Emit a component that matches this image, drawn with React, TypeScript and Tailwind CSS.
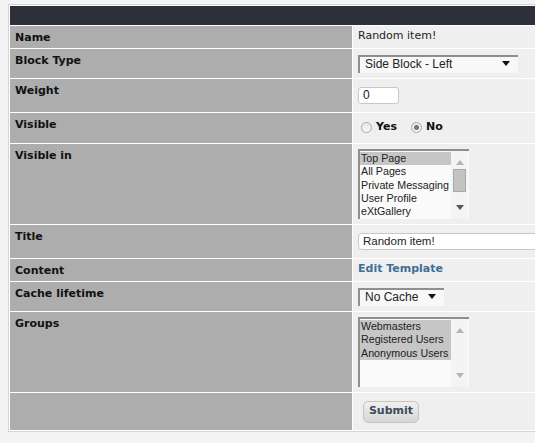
import React from 'react';

const labelFont = { fontFamily: '"DejaVu Sans", Verdana, sans-serif' };
const ctrlFont = { fontFamily: '"Liberation Sans", Arial, sans-serif' };

const Row: React.FC<{ label?: string; h: string; children?: React.ReactNode }> = ({ label, h, children }) => (
  <>
    <div className={`bg-[#adadad] pl-[5px] pt-[5px] text-[11px] leading-[13px] font-bold text-[#111] ${h}`} style={labelFont}>
      {label}
    </div>
    <div className={`bg-[#efefef] pl-[5px] flex items-center ${h}`}>{children}</div>
  </>
);

const Arrow: React.FC<{ up?: boolean; color: string }> = ({ up, color }) => (
  <svg width="8" height="5" viewBox="0 0 8 5" className="block">
    <path d={up ? 'M0 5 L4 0 L8 5 Z' : 'M0 0 L8 0 L4 5 Z'} fill={color} />
  </svg>
);

const Select: React.FC<{ value: string; w: string }> = ({ value, w }) => (
  <div
    className={`relative ${w} h-[18px] bg-[#f8f8f8] border-t-2 border-l-2 border-[#8f8f8f] text-[12px] leading-[15px] text-[#222] pl-[5px]`}
    style={ctrlFont}
  >
    {value}
    <span className="absolute right-[8px] top-[4px]">
      <Arrow color="#111" />
    </span>
  </div>
);

const ListBox: React.FC<{ items: string[]; selected: number[]; thumb?: boolean }> = ({ items, selected, thumb }) => (
  <div className="flex w-[111px] h-[70px] bg-[#fafafa] border-t-2 border-l-2 border-[#8f8f8f]" style={ctrlFont}>
    <div className="w-[91px] pt-[1px] text-[10.7px] leading-[13.3px] text-[#222] overflow-hidden whitespace-nowrap">
      {items.map((it, i) => (
        <div key={it} className={`pl-[1px] ${selected.includes(i) ? 'bg-[#c6c6c6]' : ''}`}>
          {it}
        </div>
      ))}
    </div>
    <div className="relative w-[17px] bg-[#f4f4f4]">
      <span className="absolute left-[5px] top-[9px]">
        <Arrow up color="#b5b5b5" />
      </span>
      {thumb && (
        <div className="absolute left-[2px] top-[18px] w-[13px] h-[23px] bg-[#c3c3c3] border border-[#a8a8a8]" />
      )}
      <span className="absolute left-[5px] bottom-[9px]">
        <Arrow color={thumb ? '#555' : '#b5b5b5'} />
      </span>
    </div>
  </div>
);

const Radio: React.FC<{ checked?: boolean }> = ({ checked }) => (
  <span className="inline-flex items-center justify-center w-[11px] h-[11px] rounded-full border border-[#a9a9a9] bg-gradient-to-b from-[#e6e6e6] to-[#f8f8f8]">
    {checked && <span className="w-[5px] h-[5px] rounded-full bg-[#777]" />}
  </span>
);

export default function App() {
  return (
    <div className="w-[535px] h-[443px] overflow-hidden bg-[#f4f4f4] pt-[4px] pl-[8px]">
      <div className="w-[600px] border border-[#d4d4d4] bg-white p-px">
        <div className="grid grid-cols-[342px_1fr] gap-px bg-white">
          <div className="col-span-2 h-[19px] bg-[#2d3038]" />
          <Row label="Name" h="h-[22px]">
            <span className="text-[11px] text-[#222] -mt-[1px]" style={labelFont}>Random item!</span>
          </Row>
          <Row label="Block Type" h="h-[29px]">
            <Select value="Side Block - Left" w="w-[160px]" />
          </Row>
          <Row label="Weight" h="h-[33px]">
            <div className="w-[41px] h-[17px] rounded-[3px] border border-[#c8c8c8] bg-white text-[12px] leading-[15px] pl-[4px] text-[#222]" style={ctrlFont}>
              0
            </div>
          </Row>
          <Row label="Visible" h="h-[30px]">
            <div className="flex items-center pl-[3px] pb-[2px] text-[11px] font-bold text-[#111]" style={labelFont}>
              <Radio />
              <span className="ml-[4px]">Yes</span>
              <span className="ml-[14px]"><Radio checked /></span>
              <span className="ml-[4px]">No</span>
            </div>
          </Row>
          <Row label="Visible in" h="h-[80px]">
            <ListBox items={['Top Page', 'All Pages', 'Private Messaging', 'User Profile', 'eXtGallery']} selected={[0]} thumb />
          </Row>
          <Row label="Title" h="h-[33px]">
            <div className="w-[200px] h-[17px] rounded-l-[4px] border border-[#c8c8c8] bg-white text-[11.5px] leading-[15px] pl-[4px] text-[#222]" style={ctrlFont}>
              Random item!
            </div>
          </Row>
          <Row label="Content" h="h-[22px]">
            <span className="text-[11px] font-bold text-[#3f6e96] -mt-[2px]" style={labelFont}>Edit Template</span>
          </Row>
          <Row label="Cache lifetime" h="h-[29px]">
            <Select value="No Cache" w="w-[86px]" />
          </Row>
          <Row label="Groups" h="h-[80px]">
            <ListBox items={['Webmasters', 'Registered Users', 'Anonymous Users']} selected={[0, 1, 2]} />
          </Row>
          <Row h="h-[37px]">
            <button
              className="ml-[5px] w-[56px] h-[22px] rounded-[5px] border border-[#c4c4c4] bg-gradient-to-b from-[#f0f0f0] to-[#d6d6d6] text-[11px] font-bold text-[#3b4b5c]"
              style={labelFont}
            >
              Submit
            </button>
          </Row>
        </div>
      </div>
    </div>
  );
}
